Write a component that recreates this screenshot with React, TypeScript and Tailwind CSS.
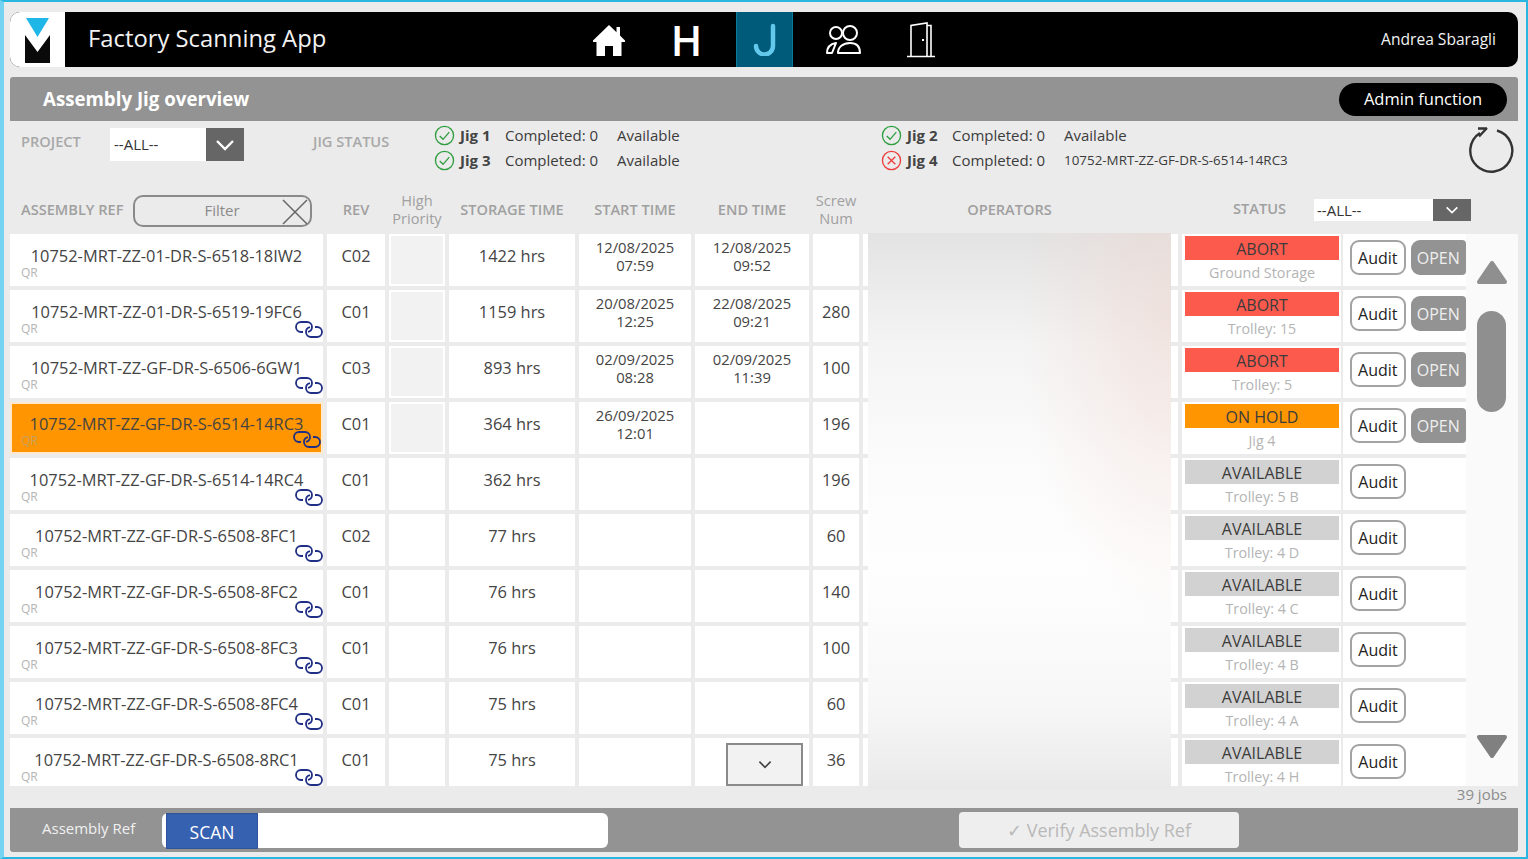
const rows = [
  { ref: '10752-MRT-ZZ-01-DR-S-6518-18IW2', rev: 'C02', hp: true, hrs: '1422 hrs', start: ['12/08/2025', '07:59'], end: ['12/08/2025', '09:52'], screw: '', status: 'ABORT', place: 'Ground Storage', open: true, link: false },
  { ref: '10752-MRT-ZZ-01-DR-S-6519-19FC6', rev: 'C01', hp: true, hrs: '1159 hrs', start: ['20/08/2025', '12:25'], end: ['22/08/2025', '09:21'], screw: '280', status: 'ABORT', place: 'Trolley: 15', open: true, link: true },
  { ref: '10752-MRT-ZZ-GF-DR-S-6506-6GW1', rev: 'C03', hp: true, hrs: '893 hrs', start: ['02/09/2025', '08:28'], end: ['02/09/2025', '11:39'], screw: '100', status: 'ABORT', place: 'Trolley: 5', open: true, link: true },
  { ref: '10752-MRT-ZZ-GF-DR-S-6514-14RC3', rev: 'C01', hp: true, hrs: '364 hrs', start: ['26/09/2025', '12:01'], end: [], screw: '196', status: 'ON HOLD', place: 'Jig 4', open: true, link: true },
  { ref: '10752-MRT-ZZ-GF-DR-S-6514-14RC4', rev: 'C01', hp: false, hrs: '362 hrs', start: [], end: [], screw: '196', status: 'AVAILABLE', place: 'Trolley: 5 B', open: false, link: true },
  { ref: '10752-MRT-ZZ-GF-DR-S-6508-8FC1', rev: 'C02', hp: false, hrs: '77 hrs', start: [], end: [], screw: '60', status: 'AVAILABLE', place: 'Trolley: 4 D', open: false, link: true },
  { ref: '10752-MRT-ZZ-GF-DR-S-6508-8FC2', rev: 'C01', hp: false, hrs: '76 hrs', start: [], end: [], screw: '140', status: 'AVAILABLE', place: 'Trolley: 4 C', open: false, link: true },
  { ref: '10752-MRT-ZZ-GF-DR-S-6508-8FC3', rev: 'C01', hp: false, hrs: '76 hrs', start: [], end: [], screw: '100', status: 'AVAILABLE', place: 'Trolley: 4 B', open: false, link: true },
  { ref: '10752-MRT-ZZ-GF-DR-S-6508-8FC4', rev: 'C01', hp: false, hrs: '75 hrs', start: [], end: [], screw: '60', status: 'AVAILABLE', place: 'Trolley: 4 A', open: false, link: true },
  { ref: '10752-MRT-ZZ-GF-DR-S-6508-8RC1', rev: 'C01', hp: false, hrs: '75 hrs', start: [], end: [], screw: '36', status: 'AVAILABLE', place: 'Trolley: 4 H', open: false, link: true },
];

const font = { fontFamily: '"Open Sans", sans-serif' };

function Logo () {
  return (
    <svg viewBox="0 0 55 55" className="w-[55px] h-[55px]">
      <path d="M16 6h23L27.500 25z" fill="#1fb6e8" />
      <path d="M15 23l12.500 17L40 23v28H15z" fill="#0a0a0a" />
    </svg>
  );
}

function LinkIcon () {
  return (
    <svg viewBox="0 0 28 17" className="absolute right-0 bottom-[4px] w-[28px] h-[17px]" fill="none" stroke="#1f2f86" strokeWidth="1.800">
      <path d="M8 11H6A5 5 0 016 1h6a5 5 0 015 5 5 5 0 01-4 4.900" />
      <path d="M20 6h2a5 5 0 010 10h-6a5 5 0 01-5-5 5 5 0 014-4.900" />
    </svg>
  );
}

function Chevron ({ className }: { className: string }) {
  return (
    <svg viewBox="0 0 20 12" className={className} fill="none" stroke="currentColor" strokeWidth="2.400">
      <path d="M2 2l8 8 8-8" />
    </svg>
  );
}

function JigIcon ({ ok }: { ok: boolean }) {
  return (
    <svg viewBox="0 0 22 22" className="w-[21px] h-[21px] shrink-0" fill="none" strokeWidth="1.400" stroke={ok ? '#2f9e3f' : '#ee3b3b'}>
      <circle cx="11" cy="11" r="9.500" />
      {ok ? <path d="M6 11.500l3.500 3.500L16 7.500" /> : <path d="M7 7l8 8M15 7l-8 8" />}
    </svg>
  );
}

function Jig ({ name, ok, info, wide }: { name: string; ok: boolean; info: string; wide?: boolean }) {
  return (
    <div className="flex items-center h-[25px] text-[15px] text-[#3c3c3c]">
      <JigIcon ok={ok} />
      <span className="ml-[5px] w-[45px] font-bold text-[#444]">{name}</span>
      <span className="w-[112px]">Completed: 0</span>
      <span className={wide ? 'text-[13.4px]' : ''}>{info}</span>
    </div>
  );
}

function StatusBar ({ status }: { status: string }) {
  let color = 'bg-[#d2d2d2]';
  if (status === 'ABORT') color = 'bg-[#fd5a4e]';
  if (status === 'ON HOLD') color = 'bg-[#ff9500]';
  return (
    <div className={`h-[24px] pt-[2px] flex items-center justify-center text-[16px] text-[#3c3c3c] ${color}`}>{status}</div>
  );
}

function Lines ({ lines }: { lines: string[] }) {
  return (
    <div className="pt-[4px] text-[14.800px] leading-[18px] text-center text-[#444]">
      {lines.map(l => <div key={l}>{l}</div>)}
    </div>
  );
}

function Head ({ className, children }: { className: string; children: any }) {
  return <div className={`text-center text-[14.600px] leading-[18px] text-[#a0a0a0] shrink-0 pb-[3px] ${className}`}>{children}</div>;
}

export default function App () {
  return (
    <div style={font} className="w-[1528px] h-[859px] overflow-hidden flex flex-col bg-[#ebebeb] border-l-4 border-t-2 border-r-2 border-b-2 border-l-[#74d3f1] border-t-[#29b6e0] border-r-[#29b6e0] border-b-[#29b6e0] pt-[10px] pl-[6px] pr-[8px]">
      {/* Top bar */}
      <div className="h-[55px] shrink-0 flex items-stretch bg-black rounded-[10px] overflow-hidden text-white">
        <div className="w-[55px] bg-white shrink-0"><Logo /></div>
        <div className="w-[515px] shrink-0 pl-[23px] pb-[1px] flex items-center text-[23.800px] text-[#f2f2f2]">Factory Scanning App</div>
        <div className="flex gap-[21px]">
          <div className="w-[57px] flex items-center justify-center">
            <svg viewBox="0 0 32 32" className="w-[32px] h-[32px]" fill="#fff">
              <path d="M16 1L0 16.500V18h3.500V32h8.500V22h8v10h8.500V18H32v-1.500L27 11.600V3h-3.500v5.200z" />
            </svg>
          </div>
          <div className="w-[57px] text-center text-[42px] leading-[55px] font-semibold">H</div>
          <div className="w-[57px] flex items-center justify-center bg-[#005a7a] border-x border-[#0a7a9c]">
            <svg viewBox="0 0 24 33" className="w-[24px] h-[33px]" fill="none" stroke="#62c8ec" strokeWidth="4.500" strokeLinecap="round">
              <path d="M20 3v20a8.500 8.500 0 01-17 0" />
            </svg>
          </div>
          <div className="w-[57px] flex items-center justify-center">
            <svg viewBox="0 0 36 30" className="w-[36px] h-[30px]" fill="none" stroke="#fff" strokeWidth="2">
              <circle cx="11" cy="8" r="6" />
              <circle cx="25" cy="8" r="7" />
              <path d="M2 28c0-5 3-9 9-10l-4 10zM13 28c0-6 5-10 12-10s10 4 10 10z" strokeLinejoin="round" />
            </svg>
          </div>
          <div className="w-[57px] flex items-center justify-center">
            <svg viewBox="0 0 28 36" className="w-[28px] h-[36px]" fill="none" stroke="#fff" strokeWidth="1.600">
              <path d="M0 34.500h28M4 34.500V3.500L20 1v33.500M20 3.500h4V34.500" />
              <path d="M16 17v2" strokeWidth="2" />
            </svg>
          </div>
        </div>
        <div className="ml-auto pr-[22px] flex items-center text-[15.600px] text-[#f2f2f2]">Andrea Sbaragli</div>
      </div>

      {/* Title bar */}
      <div className="mt-[10px] h-[44px] shrink-0 flex items-center justify-between bg-[#939393] rounded-t-[3px] pl-[33px] pr-[11px]">
        <div className="text-[18.700px] font-bold text-white">Assembly Jig overview</div>
        <div className="w-[168px] h-[33px] rounded-full bg-black text-white text-[16.500px] flex items-center justify-center">Admin function</div>
      </div>

      {/* Project and jig status */}
      <div className="h-[69px] shrink-0 flex items-start">
        <div className="w-[100px] pl-[11px] pt-[10px] text-[14.600px] font-semibold text-[#a8a8a8]">PROJECT</div>
        <div className="mt-[7px] w-[134px] h-[33px] flex bg-white">
          <div className="flex-1 pl-[4px] flex items-center text-[15px] text-[#333]">--ALL--</div>
          <div className="w-[38px] bg-[#666] flex items-center justify-center text-white"><Chevron className="w-[20px] h-[12px]" /></div>
        </div>
        <div className="ml-[69px] w-[121px] pt-[10px] text-[14.600px] font-semibold text-[#a8a8a8]">JIG STATUS</div>
        <div className="pt-[2px] w-[447px]">
          <Jig name="Jig 1" ok info="Available" />
          <Jig name="Jig 3" ok info="Available" />
        </div>
        <div className="pt-[2px]">
          <Jig name="Jig 2" ok info="Available" />
          <Jig name="Jig 4" ok={false} info="10752-MRT-ZZ-GF-DR-S-6514-14RC3" wide />
        </div>
        <svg viewBox="0 0 46 46" className="ml-auto mr-[4px] mt-[6px] w-[46px] h-[46px]" fill="none" stroke="#333" strokeWidth="2.400">
          <path d="M29 3.500a21 21 0 11-17 2.500" />
          <path d="M10 1.500h9M19 1l-8 8.500" />
        </svg>
      </div>

      {/* Column heads */}
      <div className="h-[44px] shrink-0 flex items-center gap-[4px] pb-[3px]">
        <div className="w-[313px] shrink-0 flex items-center pl-[11px] text-[14.600px] font-semibold text-[#a0a0a0]">
          <span className="w-[112px] pb-[1px]">ASSEMBLY REF</span>
          <div className="w-[179px] h-[32px] rounded-[10px] border-2 border-[#8a8a8a] flex items-center relative">
            <span className="w-[174px] text-center font-normal text-[15px] text-[#8a8a8a]">Filter</span>
            <svg viewBox="0 0 26 26" className="absolute right-[2px] top-[2px] w-[26px] h-[26px]" stroke="#666" strokeWidth="1.500">
              <path d="M1 1l24 24M25 1L1 25" />
            </svg>
          </div>
        </div>
        <Head className="w-[58px] font-semibold">REV</Head>
        <Head className="w-[56px]">High Priority</Head>
        <Head className="w-[126px] font-semibold">STORAGE TIME</Head>
        <Head className="w-[112px] font-semibold">START TIME</Head>
        <Head className="w-[114px] font-semibold">END TIME</Head>
        <Head className="w-[46px]">Screw Num</Head>
        <Head className="w-[293px] font-semibold">OPERATORS</Head>
        <div className="flex items-center ml-[73px]">
          <span className="w-[81px] text-[14.600px] font-semibold text-[#a0a0a0] pb-[3px]">STATUS</span>
          <div className="w-[157px] h-[22px] flex bg-white">
            <div className="flex-1 pl-[3px] flex items-center text-[15px] text-[#333]">--ALL--</div>
            <div className="w-[38px] bg-[#666] flex items-center justify-center text-white"><Chevron className="w-[14px] h-[8px]" /></div>
          </div>
        </div>
      </div>

      {/* Table */}
      <div className="h-[552px] shrink-0 flex relative">
        <div className="h-[552px] overflow-hidden flex flex-col gap-[4px] shrink-0">
          {rows.map(r => (
            <div key={r.ref} className="h-[52px] shrink-0 flex text-[16.400px] text-[#444]">
              <div className={r.status === 'ON HOLD' ? 'w-[313px] shrink-0 relative pt-[8px] bg-[#ff9500] border-2 border-[#ffe9cc]' : 'w-[313px] shrink-0 relative pt-[10px] bg-white'}>
                <div className="text-center leading-[24px] whitespace-nowrap">{r.ref}</div>
                <div className={r.status === 'ON HOLD' ? 'pl-[9px] mt-[-2px] text-[12px] leading-[14px] text-[#c9a05f]' : 'pl-[11px] mt-[-2px] text-[12px] leading-[14px] text-[#b5b5b5]'}>QR</div>
                {r.link && <LinkIcon />}
              </div>
              <div className="w-[58px] ml-[4px] shrink-0 bg-white pt-[10px] text-center leading-[24px]">{r.rev}</div>
              <div className="w-[56px] ml-[4px] shrink-0 bg-white p-[2px]">
                {r.hp && <div className="w-full h-full bg-[#f2f2f2]" />}
              </div>
              <div className="w-[126px] ml-[4px] shrink-0 bg-white pt-[10px] text-center leading-[24px]">{r.hrs}</div>
              <div className="w-[112px] ml-[4px] shrink-0 bg-white"><Lines lines={r.start} /></div>
              <div className="w-[114px] ml-[4px] shrink-0 bg-white relative">
                <Lines lines={r.end} />
                {r.screw === '36' && (
                  <div className="absolute left-[31px] top-[5px] w-[77px] h-[43px] bg-[#f2f2f2] border-2 border-[#8a8a8a] flex items-center justify-center text-[#444]">
                    <Chevron className="w-[14px] h-[9px]" />
                  </div>
                )}
              </div>
              <div className="w-[46px] ml-[4px] shrink-0 bg-white pt-[10px] text-center leading-[24px]">{r.screw}</div>
              <div className="w-[315px] ml-[4px] shrink-0 bg-white" />
              <div className="w-[159px] ml-[4px] shrink-0 bg-white pl-[3px] pr-[2px] pt-[2px] text-center">
                <StatusBar status={r.status} />
                <div className="text-[14.300px] leading-[22px] mt-[2px] text-[#b4b4b4]">{r.place}</div>
              </div>
              <div className="w-[123px] ml-[2px] shrink-0 bg-white pl-[7px] pt-[6px] flex items-start gap-[5px]">
                <div className="w-[56px] h-[35px] rounded-[9px] border-2 border-[#a3a3a3] flex items-center justify-center text-[16px] text-[#222]">Audit</div>
                {r.open && <div className="w-[56px] h-[35px] rounded-l-[9px] rounded-r-[4px] bg-[#939393] flex items-center justify-center text-[16px] text-[#efefef]">OPEN</div>}
              </div>
            </div>
          ))}
        </div>

        {/* Operator names, blurred out */}
        <div className="absolute left-[858px] top-[-1px] w-[303px] h-[557px] bg-[radial-gradient(ellipse_50%_55%_at_100%_15%,rgba(238,212,204,0.5)_0%,rgba(238,212,204,0)_100%),linear-gradient(180deg,#e3e3e3_0%,#f4f4f4_20%,#fbfbfb_40%,#fefefe_60%,#f7f7f7_85%,#e9e9e9_100%)]" />

        {/* Scroll controls */}
        <div className="flex-1 bg-[#fafafa] flex flex-col items-center pt-[26px] pr-[1px] pb-[27px]">
          <svg viewBox="0 0 32 25" className="w-[32px] h-[25px] shrink-0" fill="#8f8f8f" stroke="#8f8f8f" strokeWidth="4" strokeLinejoin="round">
            <path d="M16 3L3 22h26z" />
          </svg>
          <div className="mt-[26px] w-[29px] h-[101px] rounded-full bg-[#8f8f8f] shrink-0" />
          <svg viewBox="0 0 32 25" className="mt-auto w-[32px] h-[25px] shrink-0" fill="#808080" stroke="#808080" strokeWidth="4" strokeLinejoin="round">
            <path d="M3 3h26L16 22z" />
          </svg>
        </div>
      </div>

      <div className="h-[22px] shrink-0 pr-[11px] pb-[5px] flex items-center justify-end text-[15px] text-[#8c8c8c]">39 jobs</div>

      {/* Scan bar */}
      <div className="h-[44px] shrink-0 flex items-center bg-[#939393] rounded-b-[3px]">
        <div className="w-[152px] pl-[32px] text-[15px] text-[#f0f0f0] pb-[4px] shrink-0">Assembly Ref</div>
        <div className="w-[446px] h-[35px] rounded-[6px] bg-white pl-[4px] shrink-0 flex">
          <div className="w-[92px] h-[36px] pt-[3px] bg-[#3660b0] border border-[#2f5598] flex items-center justify-center text-[17.500px] text-white">SCAN</div>
        </div>
        <div className="ml-[351px] w-[280px] h-[36px] rounded-[4px] bg-[#eeeeee] flex items-center justify-center text-[18px] text-[#b9b9b9]">✓ Verify Assembly Ref</div>
      </div>
    </div>
  );
}
